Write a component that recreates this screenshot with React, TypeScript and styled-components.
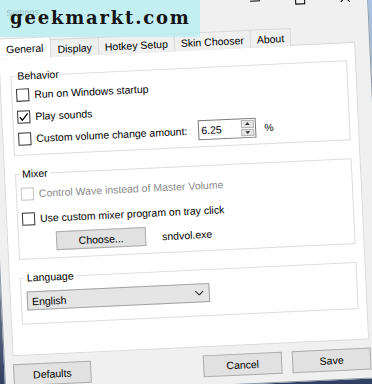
import React from "react";
import styled, { createGlobalStyle } from "styled-components";

const GlobalStyle = createGlobalStyle`
  html, body {
    margin: 0;
    padding: 0;
  }
  body {
    font-family: "Liberation Sans", Arial, sans-serif;
    background: #8d9aa8;
  }
  * {
    box-sizing: border-box;
  }
`;

const Stage = styled.div`
  position: relative;
  width: 372px;
  height: 384px;
  overflow: hidden;
  background: linear-gradient(180deg, #a9c4e6 0%, #8f98a2 65%, #2f3f63 100%);
`;

const Watermark = styled.div`
  position: absolute;
  top: 0;
  left: 0;
  width: 200px;
  height: 37px;
  padding: 8px 0 0 10px;
  background: rgba(176, 238, 242, 0.7);
  font-family: "DejaVu Serif", "Liberation Serif", serif;
  font-weight: bold;
  font-size: 18px;
  line-height: 20px;
  letter-spacing: 1.8px;
  color: #141414;
  white-space: nowrap;
`;

const Window = styled.div`
  width: 381px;
  height: 398px;
  margin: -11px 0 0 -4px;
  display: flex;
  flex-direction: column;
  background: #f0f0f0;
  border: 1px solid #8c99a6;
  font-size: 10.5px;
  color: #000;
  transform: rotate(-2.7deg);
  transform-origin: 190px 203px;
`;

const TitleBar = styled.div`
  flex: none;
  height: 29px;
  display: flex;
  align-items: center;
  padding-left: 18px;
`;

const Title = styled.span`
  font-size: 9px;
  color: #3c4a4a;
`;

const Controls = styled.div`
  margin-left: auto;
  height: 100%;
  display: flex;
`;

const ControlButton = styled.div`
  width: 45px;
  height: 100%;
  display: flex;
  align-items: center;
  justify-content: center;
`;

const MinGlyph = styled.div`
  width: 10px;
  height: 1px;
  background: #000;
`;

const MaxGlyph = styled.div`
  width: 10px;
  height: 10px;
  border: 1px solid #000;
`;

const Client = styled.div`
  flex: 1;
  display: flex;
  flex-direction: column;
  padding: 11px 0 0 8px;
`;

const TabStrip = styled.div`
  position: relative;
  z-index: 1;
  height: 21px;
  margin-bottom: -1px;
  display: flex;
  align-items: flex-end;
`;

const Tab = styled.div<{ $active?: boolean }>`
  height: ${(p) => (p.$active ? 21 : 18)}px;
  padding: 0 6px;
  display: flex;
  align-items: center;
  margin-left: -1px;
  background: ${(p) => (p.$active ? "#fff" : "#f0f0f0")};
  border: 1px solid #d9d9d9;
  border-bottom: none;
  white-space: nowrap;

  &:first-child {
    margin-left: 0;
    padding: 0 7px;
  }
`;

const Panel = styled.div`
  width: 357px;
  height: 298px;
  padding: 11px 8px 0 10px;
  display: flex;
  flex-direction: column;
  gap: 12px;
  background: #fff;
  border: 1px solid #d9d9d9;
`;

const Group = styled.fieldset<{ $pad: string; $gap: number }>`
  margin: 0;
  min-width: 0;
  padding: ${(p) => p.$pad};
  display: flex;
  flex-direction: column;
  gap: ${(p) => p.$gap}px;
  border: 1px solid #dcdcdc;
`;

const Legend = styled.legend`
  padding: 0 2px;
  line-height: 13px;
`;

const Row = styled.div`
  height: 22px;
  display: flex;
  align-items: center;
  white-space: nowrap;
`;

const CheckBox = styled.span<{ $disabled?: boolean }>`
  flex: none;
  width: 13px;
  height: 13px;
  margin-right: 5px;
  display: flex;
  align-items: center;
  justify-content: center;
  background: #fff;
  border: 1px solid ${(p) => (p.$disabled ? "#c4c4c4" : "#333")};
`;

const Label = styled.span<{ $disabled?: boolean }>`
  color: ${(p) => (p.$disabled ? "#8a8a8a" : "#000")};
`;

const Spin = styled.div`
  width: 58px;
  height: 20px;
  margin-left: 11px;
  display: flex;
  border: 1px solid #7a7a7a;
  background: #fff;
`;

const SpinValue = styled.span`
  flex: 1;
  padding-left: 2px;
  display: flex;
  align-items: center;
`;

const SpinButtons = styled.div`
  width: 15px;
  display: flex;
  flex-direction: column;
  gap: 1px;
  padding: 1px;
`;

const SpinButton = styled.div`
  flex: 1;
  display: flex;
  align-items: center;
  justify-content: center;
  background: #e6e6e6;
  border: 1px solid #b5b5b5;
`;

const Percent = styled.span`
  margin-left: 8px;
`;

const PushButton = styled.div<{ $w: number; $h: number }>`
  flex: none;
  width: ${(p) => p.$w}px;
  height: ${(p) => p.$h}px;
  display: flex;
  align-items: center;
  justify-content: center;
  background: #e1e1e1;
  border: 1px solid #adadad;
`;

const ChooseRow = styled.div`
  height: 19px;
  padding-left: 33px;
  display: flex;
  align-items: center;
  gap: 16px;
`;

const Combo = styled.div`
  width: 183px;
  height: 19px;
  margin-left: 1px;
  padding: 0 5px 0 4px;
  display: flex;
  align-items: center;
  justify-content: space-between;
  background: #e5e5e5;
  border: 1px solid #a3a3a3;
`;

const Footer = styled.div`
  width: 358px;
  margin-top: 8px;
  display: flex;
  gap: 10px;

  & > :first-child {
    margin-right: auto;
  }
`;

const Check = () => (
  <svg width="11" height="11" viewBox="0 0 11 11">
    <polyline points="1.5,5.5 4,8.5 9.5,2" fill="none" stroke="#000" strokeWidth="1.3" />
  </svg>
);

const Arrow = ({ up }: { up?: boolean }) => (
  <svg width="5" height="3" viewBox="0 0 5 3">
    <polygon points={up ? "0,3 2.5,0 5,3" : "0,0 5,0 2.5,3"} fill="#333" />
  </svg>
);

const CloseGlyph = () => (
  <svg width="10" height="10" viewBox="0 0 10 10">
    <path d="M0.5 0.5 L9.5 9.5 M9.5 0.5 L0.5 9.5" stroke="#000" strokeWidth="1" />
  </svg>
);

const Chevron = () => (
  <svg width="9" height="5" viewBox="0 0 9 5">
    <polyline points="0.5,0.5 4.5,4.5 8.5,0.5" fill="none" stroke="#333" strokeWidth="1.1" />
  </svg>
);

const tabs = ["General", "Display", "Hotkey Setup", "Skin Chooser", "About"];

const App = () => {
  return (
    <Stage>
      <GlobalStyle />
      <Window>
        <TitleBar>
          <Title>Settings</Title>
          <Controls>
            <ControlButton>
              <MinGlyph />
            </ControlButton>
            <ControlButton>
              <MaxGlyph />
            </ControlButton>
            <ControlButton>
              <CloseGlyph />
            </ControlButton>
          </Controls>
        </TitleBar>
        <Client>
          <TabStrip>
            {tabs.map((t, i) => (
              <Tab key={t} $active={i === 0}>
                {t}
              </Tab>
            ))}
          </TabStrip>
          <Panel>
            <Group $pad="1px 4px 5px" $gap={0}>
              <Legend>Behavior</Legend>
              <Row>
                <CheckBox />
                <Label>Run on Windows startup</Label>
              </Row>
              <Row>
                <CheckBox>
                  <Check />
                </CheckBox>
                <Label>Play sounds</Label>
              </Row>
              <Row>
                <CheckBox />
                <Label>Custom volume change amount:</Label>
                <Spin>
                  <SpinValue>6.25</SpinValue>
                  <SpinButtons>
                    <SpinButton>
                      <Arrow up />
                    </SpinButton>
                    <SpinButton>
                      <Arrow />
                    </SpinButton>
                  </SpinButtons>
                </Spin>
                <Percent>%</Percent>
              </Row>
            </Group>
            <Group $pad="2px 4px 7px" $gap={3}>
              <Legend>Mixer</Legend>
              <Row>
                <CheckBox $disabled />
                <Label $disabled>Control Wave instead of Master Volume</Label>
              </Row>
              <Row>
                <CheckBox />
                <Label>Use custom mixer program on tray click</Label>
              </Row>
              <ChooseRow>
                <PushButton $w={90} $h={19}>
                  Choose...
                </PushButton>
                <Label>sndvol.exe</Label>
              </ChooseRow>
            </Group>
            <Group $pad="7px 4px 13px" $gap={0}>
              <Legend>Language</Legend>
              <Combo>
                <span>English</span>
                <Chevron />
              </Combo>
            </Group>
          </Panel>
          <Footer>
            <PushButton $w={78} $h={22}>
              Defaults
            </PushButton>
            <PushButton $w={79} $h={22}>
              Cancel
            </PushButton>
            <PushButton $w={79} $h={22}>
              Save
            </PushButton>
          </Footer>
        </Client>
      </Window>
      <Watermark>geekmarkt.com</Watermark>
    </Stage>
  );
};

export default App;
